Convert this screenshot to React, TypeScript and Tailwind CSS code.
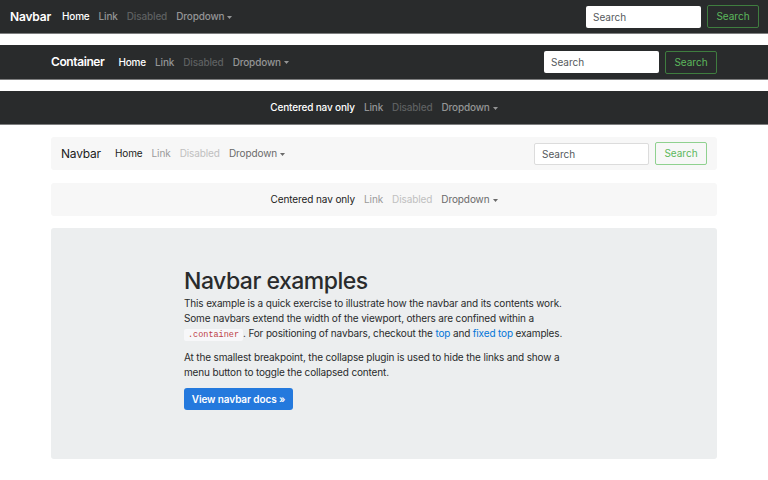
import { useState } from "react";

const font = "font-['Inter','Liberation_Sans',sans-serif]";

function Caret({ className }: { className: string }) {
    return (
        <svg width="5" height="3" viewBox="0 0 5 3" className={className}>
            <path d="M0 0h5L2.5 3z" fill="currentColor" />
        </svg>
    );
}

function DarkLinks() {
    return (
        <div className="flex items-center gap-[9px] text-[10px] font-medium tracking-[-0.15px]">
            <a className="text-white">Home</a>
            <a className="text-[#949596]">Link</a>
            <a className="text-[#5e6061]">Disabled</a>
            <a className="flex items-center gap-[3px] text-[#949596]">
                Dropdown <Caret className="mt-[1px]" />
            </a>
        </div>
    );
}

function LightLinks() {
    return (
        <div className="flex items-center gap-[9px] text-[10px] tracking-[-0.1px]">
            <a className="text-[#1c1c1c]">Home</a>
            <a className="text-[#9a9a9a]">Link</a>
            <a className="text-[#c0c0c0]">Disabled</a>
            <a className="flex items-center gap-[3px] text-[#6a6a6a]">
                Dropdown <Caret className="mt-[1px]" />
            </a>
        </div>
    );
}

function SearchForm({ dark }: { dark?: boolean }) {
    const [q, setQ] = useState("");
    return (
        <form className="flex items-center gap-[6px]" onSubmit={(e) => e.preventDefault()}>
            <input
                value={q}
                onChange={(e) => setQ(e.target.value)}
                placeholder="Search"
                className={`h-[22px] w-[115px] rounded-[2px] bg-white px-[7px] text-[10px] text-[#464a4c] placeholder:text-[#55595c] outline-none ${
                    dark ? "" : "border border-[#dcdcdc]"
                }`}
            />
            <button
                className={`h-[23px] w-[52px] rounded-[2px] border text-[10px] text-[#5cb85c] ${
                    dark ? "border-[#3f7d3f]" : "border-[#8fd18f]"
                }`}
            >
                Search
            </button>
        </form>
    );
}

export default function App() {
    return (
        <div className={`min-h-[480px] bg-white ${font}`}>
            {/* full width */}
            <nav className="mb-[11px] flex h-[34px] items-center border-b border-[#7d7e7f] bg-[#292b2c] pl-[10px] pr-[9px]">
                <span className="mr-[11px] text-[12px] font-semibold tracking-[-0.2px] text-white">Navbar</span>
                <DarkLinks />
                <div className="ml-auto">
                    <SearchForm dark />
                </div>
            </nav>

            {/* container */}
            <nav className="mb-[11px] h-[35px] border-b border-[#7d7e7f] bg-[#292b2c]">
                <div className="mx-auto flex h-full w-[666px] items-center">
                    <span className="mr-[14px] text-[12px] font-semibold tracking-[-0.4px] text-white">Container</span>
                    <DarkLinks />
                    <div className="ml-auto">
                        <SearchForm dark />
                    </div>
                </div>
            </nav>

            {/* centered */}
            <nav className="mb-[12px] flex h-[34px] items-center justify-center border-b border-[#7d7e7f] bg-[#292b2c] text-[10px] font-medium tracking-[-0.15px]">
                <div className="flex items-center gap-[9px]">
                    <a className="text-white">Centered nav only</a>
                    <a className="text-[#949596]">Link</a>
                    <a className="text-[#5e6061]">Disabled</a>
                    <a className="flex items-center gap-[3px] text-[#949596]">
                        Dropdown <Caret className="mt-[1px]" />
                    </a>
                </div>
            </nav>

            <div className="mx-auto w-[666px]">
                <nav className="mb-[13px] flex h-[33px] items-center rounded-[3px] bg-[#f7f7f7] pl-[10px] pr-[10px]">
                    <span className="mr-[14px] text-[12px] tracking-[-0.2px] text-[#1c1c1c]">Navbar</span>
                    <LightLinks />
                    <div className="ml-auto">
                        <SearchForm />
                    </div>
                </nav>

                <nav className="mb-[12px] flex h-[33px] items-center justify-center rounded-[3px] bg-[#f7f7f7] text-[10px] tracking-[-0.1px]">
                    <div className="flex items-center gap-[9px]">
                        <a className="text-[#1c1c1c]">Centered nav only</a>
                        <a className="text-[#9a9a9a]">Link</a>
                        <a className="text-[#c0c0c0]">Disabled</a>
                        <a className="flex items-center gap-[3px] text-[#6a6a6a]">
                            Dropdown <Caret className="mt-[1px]" />
                        </a>
                    </div>
                </nav>

                <div className="h-[231px] rounded-[3px] bg-[#eceeef] pl-[133px] pt-[40px]">
                    <div className="w-[380px] text-[10px] leading-[15px] tracking-[-0.15px] text-[#292b2c]">
                        <h1 className="mb-[2px] text-[23px] font-medium leading-[26px] tracking-[-0.5px]">Navbar examples</h1>
                        <p className="mb-[7px]">
                            This example is a quick exercise to illustrate how the navbar and its contents work. Some
                            navbars extend the width of the viewport, others are confined within a{" "}
                            <code className="rounded-[2px] bg-[#f7f7f9] px-[4px] py-[1px] font-['Liberation_Mono',monospace] text-[8.5px] tracking-normal text-[#bd4147]">
                                .container
                            </code>
                            . For positioning of navbars, checkout the <a className="text-[#0275d8]">top</a> and{" "}
                            <a className="text-[#0275d8]">fixed top</a> examples.
                        </p>
                        <p className="mb-[8px]">
                            At the smallest breakpoint, the collapse plugin is used to hide the links and show a menu
                            button to toggle the collapsed content.
                        </p>
                        <button className="h-[22px] w-[109px] rounded-[3px] bg-[#2479dd] text-[10px] font-semibold tracking-[-0.1px] text-white">
                            View navbar docs »
                        </button>
                    </div>
                </div>
            </div>
        </div>
    );
}
